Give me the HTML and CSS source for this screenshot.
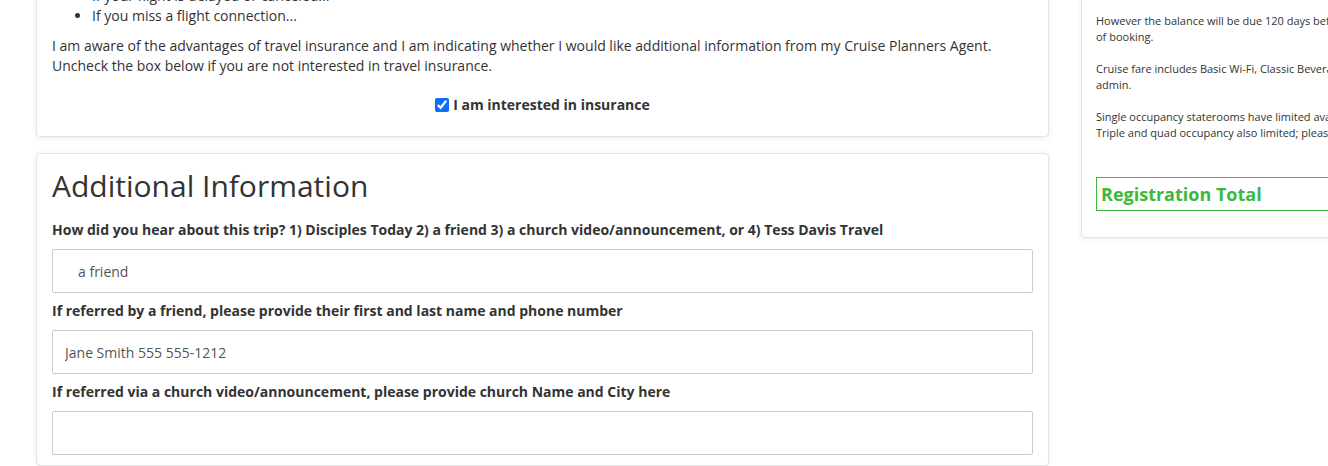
FILE: index.html
```html
<!DOCTYPE html>
<html>
<head>
<meta charset="utf-8">
<link rel="stylesheet" href="styles.css">
</head>
<body>
<div class="page">
  <div class="main">
    <div class="card card-insurance">
      <ul class="bullets">
        <li>If your flight is delayed or canceled...</li>
        <li>If you miss a flight connection...</li>
      </ul>
      <p class="notice">I am aware of the advantages of travel insurance and I am indicating whether I would like additional information from my Cruise Planners Agent.<br>Uncheck the box below if you are not interested in travel insurance.</p>
      <div class="check-row">
        <label class="check"><input type="checkbox" checked> I am interested in insurance</label>
      </div>
    </div>

    <div class="card card-info">
      <h1 class="title">Additional Information</h1>
      <div class="field">
        <label class="field-label">How did you hear about this trip? 1) Disciples Today 2) a friend 3) a church video/announcement, or 4) Tess Davis Travel</label>
        <input class="field-input indented" type="text" value="a friend">
      </div>
      <div class="field">
        <label class="field-label">If referred by a friend, please provide their first and last name and phone number</label>
        <input class="field-input" type="text" value="Jane Smith 555 555-1212">
      </div>
      <div class="field">
        <label class="field-label">If referred via a church video/announcement, please provide church Name and City here</label>
        <input class="field-input" type="text" value="">
      </div>
    </div>
  </div>

  <div class="side">
    <div class="card card-side">
      <p class="side-text">However the balance will be due 120 days before sailing or at the time<br>of booking.</p>
      <p class="side-text">Cruise fare includes Basic Wi-Fi, Classic Beverage Package, gratuities and<br>admin.</p>
      <p class="side-text">Single occupancy staterooms have limited availability at this time.<br>Triple and quad occupancy also limited; please contact us.</p>
      <div class="total">Registration Total</div>
    </div>
  </div>
</div>
</body>
</html>
```

FILE: styles.css
```css
html, body {
  margin: 0;
  padding: 0;
  background: #ffffff;
  overflow: hidden;
}

body {
  font-family: "Open Sans", "Liberation Sans", sans-serif;
  font-size: 14px;
  line-height: 20px;
  color: #333333;
  width: 1328px;
  height: 466px;
}

.page {
  display: flex;
  align-items: flex-start;
  gap: 32px;
  padding-left: 36px;
  margin-top: -31px;
}

.main {
  width: 1013px;
  flex: none;
  display: flex;
  flex-direction: column;
  gap: 16px;
}

.card {
  background: #fff;
  border: 1px solid #e3e3e3;
  border-radius: 4px;
  box-shadow: 0 1px 6px rgba(0, 0, 0, 0.08);
}

.card-insurance {
  padding: 16px 15px 21px 15px;
}

.bullets {
  margin: 0 0 10px 0;
  padding-left: 40px;
}

.notice {
  margin: 0 0 19px 0;
}

.check-row {
  display: flex;
  justify-content: center;
}

.check {
  font-weight: 700;
  display: flex;
  align-items: center;
  gap: 4px;
  height: 20px;
}

.check input {
  margin: 0;
  width: 14px;
  height: 14px;
  accent-color: #0d6efd;
}

.card-info {
  padding: 12px 15px 10px 15px;
}

.title {
  font-size: 30px;
  font-weight: 400;
  line-height: 40px;
  margin: 0 0 14px 0;
  color: #333;
}

.field {
  display: flex;
  flex-direction: column;
  margin-bottom: 8px;
}

.field:last-child {
  margin-bottom: 0;
}

.field-label {
  font-weight: 700;
  margin-bottom: 9px;
  line-height: 20px;
}

.field-input {
  box-sizing: border-box;
  height: 44px;
  width: 100%;
  border: 1px solid #cccccc;
  border-radius: 2px;
  padding: 0 12px;
  font-family: "Open Sans", "Liberation Sans", sans-serif;
  font-size: 14px;
  color: #555555;
  background: #fff;
  outline: none;
}

.field-input.indented {
  padding-left: 25px;
}

.side {
  width: 300px;
  flex: none;
}

.card-side {
  padding: 43px 15px 26px 14px;
  font-size: 11px;
  line-height: 16px;
  color: #333;
  white-space: nowrap;
}

.side-text {
  margin: 0 0 16px 0;
}

.total {
  margin-top: 36px;
  border: 1px solid #3cb83c;
  height: 32px;
  display: flex;
  align-items: center;
  padding-left: 4px;
  font-size: 18px;
  font-weight: 700;
  color: #3cb83c;
}
```
